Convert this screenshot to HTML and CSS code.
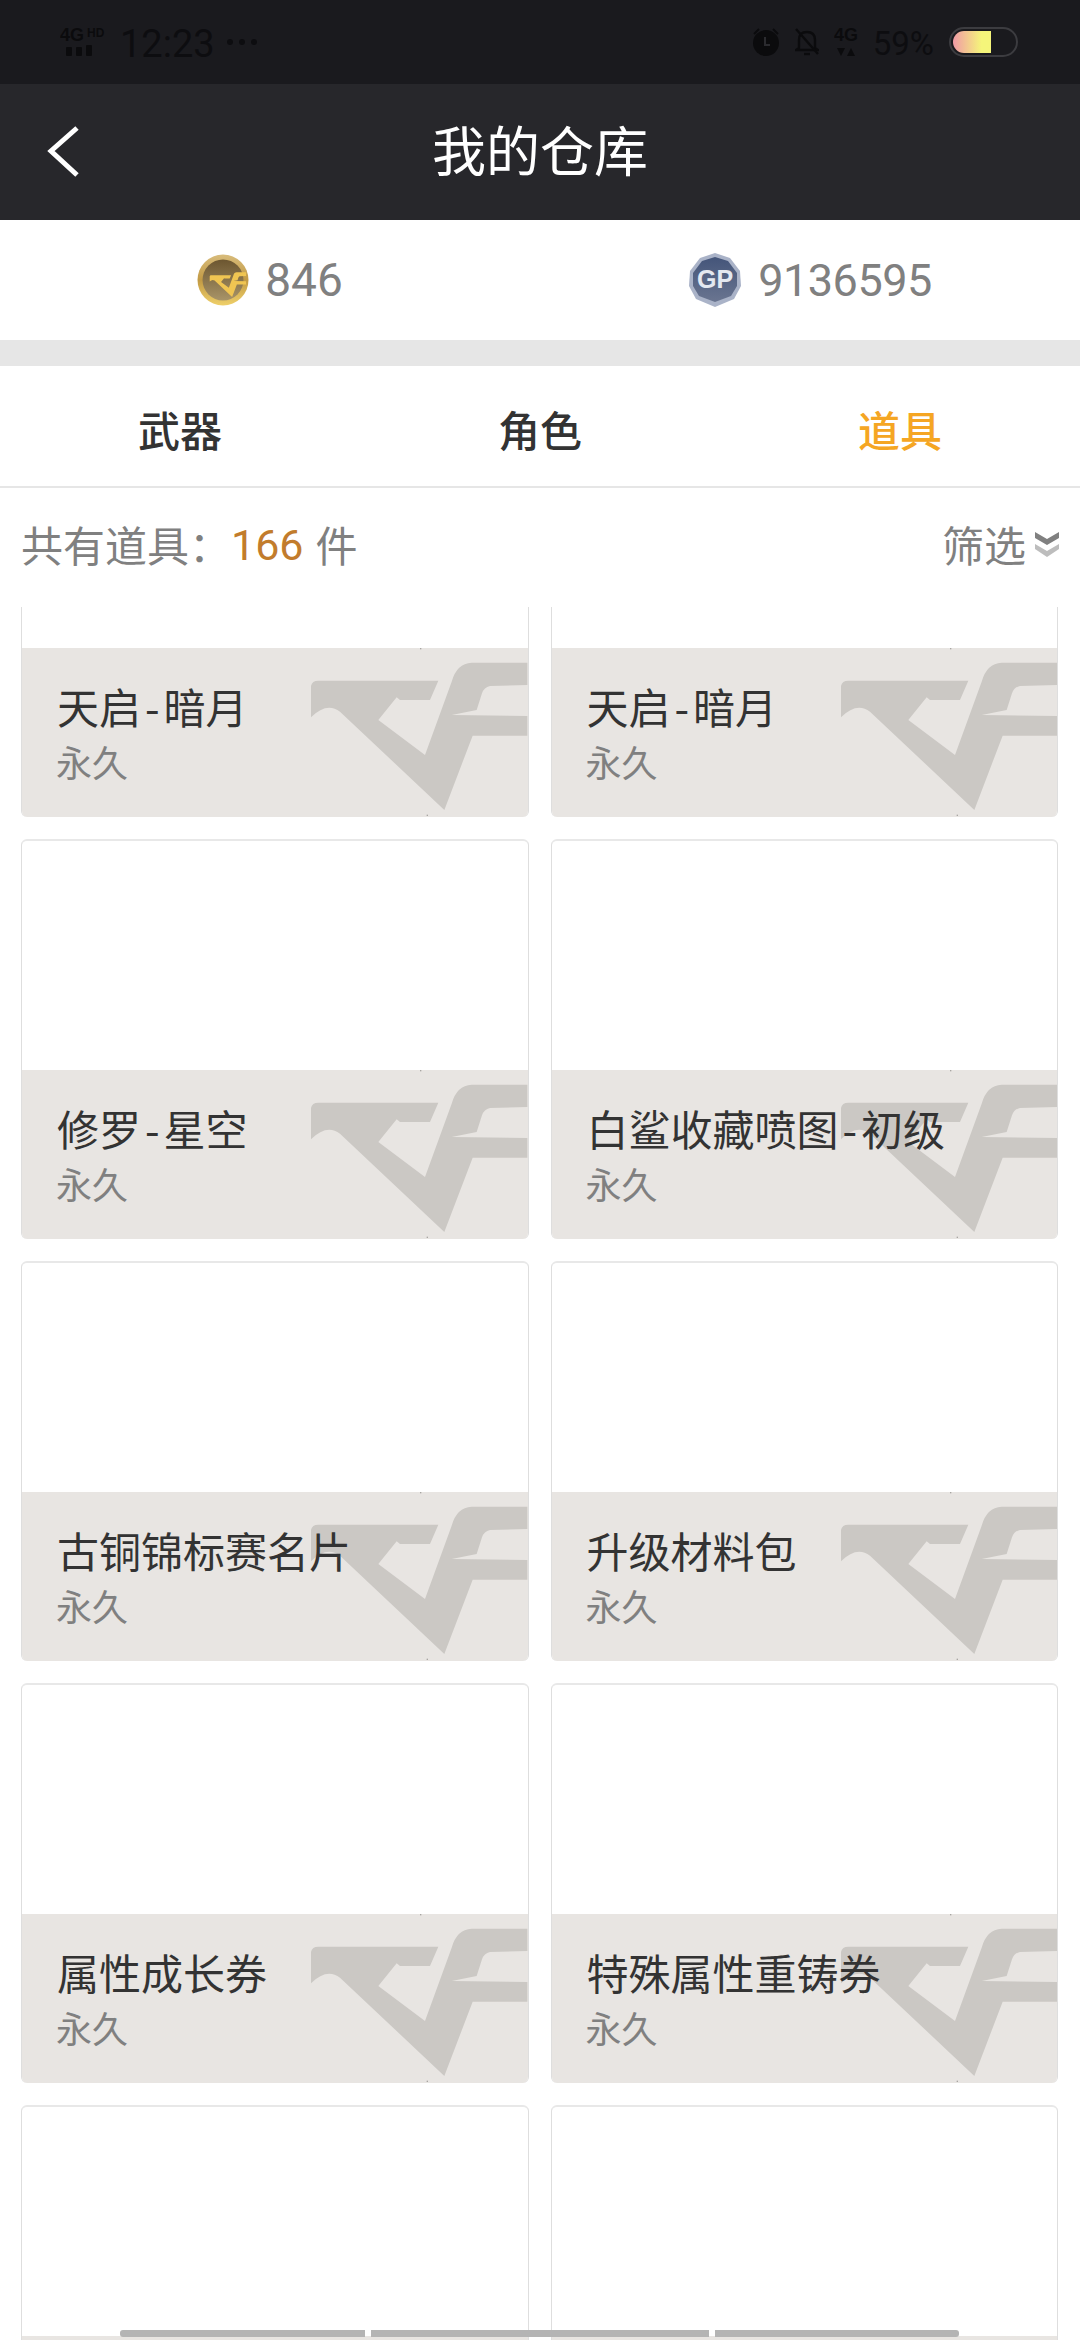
FILE: index.html
```html
<!DOCTYPE html>
<html lang="zh-CN">
<head>
<meta charset="utf-8">
<title>我的仓库</title>
<link rel="stylesheet" href="styles.css">
</head>
<body>
<svg class="defs" width="0" height="0" aria-hidden="true">
  <defs>
    <path id="cf" d="M93,232 L93,138 Q96,122 115,122 L475,122 L450,180 L360,180 L350,172 L295,240 L435,345 L515,125 Q530,70 575,68 L742,68 L742,135 L630,138 Q612,142 606,160 L590,210 L515,225 L742,228 L742,287 L578,287 L493,510 L180,215 Q140,185 93,232 Z"/>
  </defs>
</svg>
<div class="page">
  <div class="status">
    <div class="status-left">
      <svg class="sig" width="46" height="40" viewBox="0 -5 46 40">
        <text x="0" y="14" class="sig-4g">4G</text>
        <text x="27" y="10" class="sig-hd">HD</text>
        <rect x="6" y="20" width="6" height="9" rx="1"/><rect x="16" y="20" width="6" height="9" rx="1"/><rect x="26" y="18" width="6" height="11" rx="1"/>
      </svg>
      <span class="clock">12:23</span>
      <span class="dots"><i></i><i></i><i></i></span>
    </div>
    <div class="status-right">
      <svg width="28" height="30" viewBox="0 0 28 30">
        <circle cx="14" cy="16" r="13" fill="#0b0b0d"/>
        <path d="M2,7 L7,2 M26,7 L21,2" stroke="#0b0b0d" stroke-width="2" fill="none"/>
        <path d="M13,10 V18 H18" stroke="#2b2b2f" stroke-width="2" fill="none"/>
      </svg>
      <svg width="24" height="30" viewBox="0 0 24 30" fill="none" stroke="#0b0b0d" stroke-width="2.4">
        <path d="M4,21 V13 Q4,5 12,5 Q20,5 20,13 V21 L23,23 H1 Z"/>
        <path d="M9,27 H15"/>
        <path d="M1,2 L23,27"/>
      </svg>
      <svg width="24" height="40" viewBox="0 -5 24 40">
        <text x="0" y="14" class="net-4g" textLength="24" lengthAdjust="spacingAndGlyphs">4G</text>
        <path d="M3,21 H11 L7,29 Z M13,29 H21 L17,21 Z" fill="#0b0b0d"/>
      </svg>
      <span class="pct">59%</span>
      <div class="battery"><div class="battery-fill"></div></div>
    </div>
  </div>

  <header class="header">
    <svg class="back" width="34" height="54" viewBox="0 0 34 54"><path d="M31,3 L5,26 L31,50" fill="none" stroke="#fff" stroke-width="5"/></svg>
    <h1 class="title">我的仓库</h1>
    <span></span>
  </header>

  <div class="currency">
    <div class="cur">
      <svg width="52" height="54" viewBox="0 0 52 54">
        <defs>
          <linearGradient id="ring" x1="0" y1="0" x2="0" y2="1"><stop offset="0" stop-color="#d8bc7c"/><stop offset=".5" stop-color="#c29a44"/><stop offset="1" stop-color="#efd06a"/></linearGradient>
          <linearGradient id="face" x1="0" y1="0" x2="0" y2="1"><stop offset="0" stop-color="#6c5630"/><stop offset="1" stop-color="#a89468"/></linearGradient>
        </defs>
        <circle cx="26" cy="27" r="25.5" fill="url(#ring)"/>
        <circle cx="26" cy="27" r="20.5" fill="url(#face)"/>
        <use href="#cf" transform="translate(7.500,15.500) scale(0.056)" fill="#f0c552"/>
      </svg>
      <span class="cur-num">846</span>
    </div>
    <div class="cur">
      <svg width="54" height="54" viewBox="0 0 54 54">
        <defs><linearGradient id="gp" x1="0" y1="0" x2="0" y2="1"><stop offset="0" stop-color="#44557a"/><stop offset="1" stop-color="#6a7590"/></linearGradient></defs>
        <polygon points="27,0 42,5 52,18 53,33 46,46 27,54 8,46 1,33 2,18 12,5" fill="#aab3c8"/>
        <polygon points="27,4 40,8 49,20 49,33 43,43 27,49 11,43 5,33 5,20 14,8" fill="url(#gp)"/>
        <text x="27" y="35" class="gp-text">GP</text>
      </svg>
      <span class="cur-num cur-num-long">9136595</span>
    </div>
  </div>

  <div class="band"></div>

  <nav class="tabs">
    <a class="tab">武器</a>
    <a class="tab">角色</a>
    <a class="tab tab-on">道具</a>
  </nav>

  <div class="count-row">
    <div class="count">共有道具：<span class="count-num">166</span><span class="count-unit">件</span></div>
    <div class="filter">筛选
      <svg width="26" height="28" viewBox="0 0 26 28" fill="none">
        <path d="M1,2 L13,9 L25,2 V8 L13,15 L1,8 Z" fill="#808080"/>
        <path d="M1,14 L13,21 L25,14 V19 L13,27 L1,19 Z" fill="#bdbdbd"/>
      </svg>
    </div>
  </div>

  <div class="list">
    <div class="grid">
      <div class="card"><div class="thumb"></div><div class="info"><svg class="mark" viewBox="48 24 696 507"><use href="#cf"/><rect class="tick" x="420" y="24" width="4" height="4"/><rect class="tick" x="440" y="524" width="4" height="4"/></svg><div class="name">天启<span class="dash">-</span>暗月</div><div class="term">永久</div></div></div>
      <div class="card"><div class="thumb"></div><div class="info"><svg class="mark" viewBox="48 24 696 507"><use href="#cf"/><rect class="tick" x="420" y="24" width="4" height="4"/><rect class="tick" x="440" y="524" width="4" height="4"/></svg><div class="name">天启<span class="dash">-</span>暗月</div><div class="term">永久</div></div></div>
      <div class="card"><div class="thumb"></div><div class="info"><svg class="mark" viewBox="48 24 696 507"><use href="#cf"/><rect class="tick" x="420" y="24" width="4" height="4"/><rect class="tick" x="440" y="524" width="4" height="4"/></svg><div class="name">修罗<span class="dash">-</span>星空</div><div class="term">永久</div></div></div>
      <div class="card"><div class="thumb"></div><div class="info"><svg class="mark" viewBox="48 24 696 507"><use href="#cf"/><rect class="tick" x="420" y="24" width="4" height="4"/><rect class="tick" x="440" y="524" width="4" height="4"/></svg><div class="name">白鲨收藏喷图<span class="dash">-</span>初级</div><div class="term">永久</div></div></div>
      <div class="card"><div class="thumb"></div><div class="info"><svg class="mark" viewBox="48 24 696 507"><use href="#cf"/><rect class="tick" x="420" y="24" width="4" height="4"/><rect class="tick" x="440" y="524" width="4" height="4"/></svg><div class="name">古铜锦标赛名片</div><div class="term">永久</div></div></div>
      <div class="card"><div class="thumb"></div><div class="info"><svg class="mark" viewBox="48 24 696 507"><use href="#cf"/><rect class="tick" x="420" y="24" width="4" height="4"/><rect class="tick" x="440" y="524" width="4" height="4"/></svg><div class="name">升级材料包</div><div class="term">永久</div></div></div>
      <div class="card"><div class="thumb"></div><div class="info"><svg class="mark" viewBox="48 24 696 507"><use href="#cf"/><rect class="tick" x="420" y="24" width="4" height="4"/><rect class="tick" x="440" y="524" width="4" height="4"/></svg><div class="name">属性成长券</div><div class="term">永久</div></div></div>
      <div class="card"><div class="thumb"></div><div class="info"><svg class="mark" viewBox="48 24 696 507"><use href="#cf"/><rect class="tick" x="420" y="24" width="4" height="4"/><rect class="tick" x="440" y="524" width="4" height="4"/></svg><div class="name">特殊属性重铸券</div><div class="term">永久</div></div></div>
      <div class="card"><div class="thumb"></div><div class="info"></div></div>
      <div class="card"><div class="thumb"></div><div class="info"></div></div>
    </div>
    <div class="scrollbar"><i class="seg seg-a"></i><i class="seg seg-b"></i><i class="seg seg-c"></i></div>
  </div>
</div>
</body>
</html>
```

FILE: styles.css
```css
* { box-sizing: border-box; }
html, body { margin: 0; padding: 0; background: #fff; }
body { font-family: "Noto Sans CJK SC", "Noto Sans", sans-serif; }
.defs { position: absolute; }
.page { width: 1080px; height: 2340px; overflow: hidden; display: flex; flex-direction: column; }

.status { height: 84px; flex: none; background: #1a1a1e; display: flex; justify-content: space-between; align-items: center; padding: 0 62px 0 60px; color: #0d0d10; }
.status-left, .status-right { display: flex; align-items: center; }
.status-right { gap: 15px; }
.sig { fill: #0b0b0d; margin-right: 14px; }
.sig-4g { font: 700 18px "Liberation Sans", sans-serif; fill: #0b0b0d; }
.sig-hd { font: 700 12px "Liberation Sans", sans-serif; fill: #0b0b0d; }
.net-4g { font: 700 18px "Liberation Sans", sans-serif; fill: #0b0b0d; }
.clock { font: 400 38px/1 Roboto, sans-serif; padding-top: 4px; }
.dots { display: flex; gap: 6px; margin-left: 12px; }
.dots i { width: 6px; height: 6px; border-radius: 50%; background: #0d0d10; }
.pct { font: 400 33px/1 Roboto, sans-serif; padding-top: 3px; }
.battery { width: 69px; height: 30px; border: 2px solid #3c3c40; border-radius: 15px; padding: 2px; overflow: hidden; }
.battery-fill { width: 38px; height: 100%; border-radius: 12px 0 0 12px; background: linear-gradient(90deg, #f09aa6, #f5f57a 75%); }

.header { height: 136px; flex: none; background: #27272b; display: grid; grid-template-columns: 1fr auto 1fr; align-items: center; padding-left: 46px; }
.back { display: block; }
.title { margin: 0; padding-bottom: 6px; transform: translateX(-23px); font-size: 54px; font-weight: 400; line-height: 1; color: #fff; }

.currency { height: 120px; flex: none; display: grid; grid-template-columns: 1fr 1fr; background: #fff; }
.cur { display: flex; align-items: center; justify-content: center; gap: 16px; }
.cur-num { font: 400 46px/1 Roboto, sans-serif; color: #808080; }
.cur-num-long { font-size: 45px; letter-spacing: -.5px; }
.gp-text { font: 700 25px "Liberation Sans", sans-serif; fill: #e4e8f0; text-anchor: middle; }

.band { height: 26px; flex: none; background: #e6e6e6; }

.tabs { height: 122px; flex: none; display: grid; grid-template-columns: repeat(3, 1fr); border-bottom: 2px solid #e6e6e6; background: #fff; }
.tab { display: flex; align-items: center; justify-content: center; padding-top: 5px; font-size: 42px; font-weight: 500; color: #333; }
.tab-on { color: #f5a623; }

.count-row { height: 119px; flex: none; display: flex; justify-content: space-between; align-items: center; padding: 0 20px 7px 21px; color: #808080; }
.count { font-size: 42px; line-height: 1; display: flex; align-items: center; }
.count-num { font: 400 43px/1 Roboto, sans-serif; color: #c27c2c; padding-top: 3px; }
.count-unit { margin-left: 12px; }
.filter { font-size: 42px; line-height: 1; display: flex; align-items: center; gap: 8px; }

.list { position: relative; flex: 1; overflow: hidden; }
.grid { display: grid; grid-template-columns: 1fr 1fr; gap: 22px; padding: 0 22px 0 21px; margin-top: -190px; }
.card { height: 400px; display: flex; flex-direction: column; border-radius: 6px; overflow: hidden; border: 1px solid #dedede; border-top: 2px solid #e8e8e8; border-bottom: 0; background: #fff; }
.thumb { height: 229px; flex: none; }
.info { position: relative; flex: 1; background: #e8e5e2; padding: 33px 0 0 36px; margin: 0 -1px; overflow: hidden; }
.mark { position: absolute; left: 275px; top: 0; width: 232px; height: 169px; fill: #cbc8c4; }
.tick { fill: #a8a6a2; }
.name { position: relative; font-size: 42px; line-height: 50px; color: #333; white-space: nowrap; }
.dash { margin: 0 4px; }
.term { position: relative; font-size: 36px; line-height: 48px; margin: 6px 0 0 -1px; color: #808080; }

.scrollbar { position: absolute; left: 120px; bottom: 3px; display: flex; gap: 6px; }
.seg { height: 7px; background: #b4b4b4; }
.seg-a { width: 245px; border-radius: 3px 0 0 3px; }
.seg-b { width: 338px; }
.seg-c { width: 244px; border-radius: 0 3px 3px 0; }
```
